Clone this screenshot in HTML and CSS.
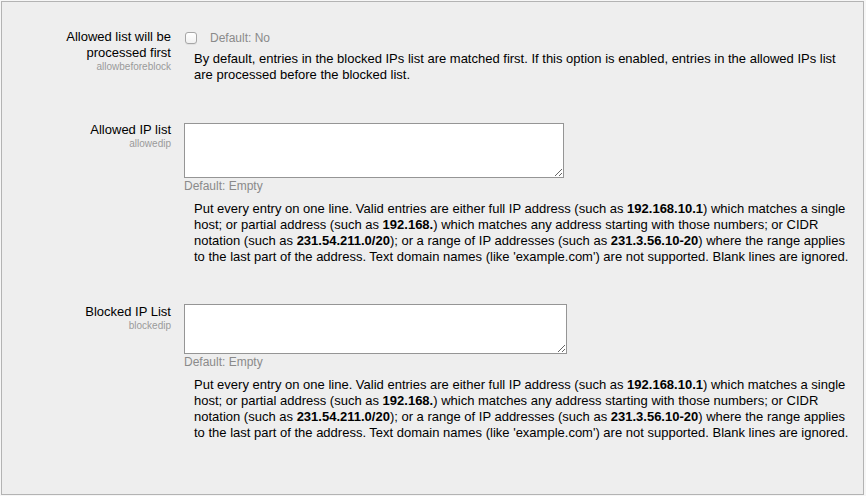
FILE: index.html
```html
<!DOCTYPE html>
<html>
<head>
<meta charset="utf-8">
<title>IP settings</title>
<link rel="stylesheet" href="styles.css">
</head>
<body>
<div class="panel">
  <div class="row row-first">
    <div class="label">
      <div class="label-title">Allowed list will be processed first</div>
      <div class="label-key">allowbeforeblock</div>
    </div>
    <div class="field field-check">
      <div class="check-line">
        <input type="checkbox" class="check">
        <span class="default">Default: No</span>
      </div>
      <p class="desc desc-check">By default, entries in the blocked IPs list are matched first. If this option is enabled, entries in the allowed IPs list are processed before the blocked list.</p>
    </div>
  </div>

  <div class="row row-gap">
    <div class="label">
      <div class="label-title">Allowed IP list</div>
      <div class="label-key">allowedip</div>
    </div>
    <div class="field field-area">
      <textarea class="area area-allowed"></textarea>
      <div class="default">Default: Empty</div>
      <p class="desc">Put every entry on one line. Valid entries are either full IP address (such as <b>192.168.10.1</b>) which matches a single host; or partial address (such as <b>192.168.</b>) which matches any address starting with those numbers; or CIDR notation (such as <b>231.54.211.0/20</b>); or a range of IP addresses (such as <b>231.3.56.10-20</b>) where the range applies to the last part of the address. Text domain names (like 'example.com') are not supported. Blank lines are ignored.</p>
    </div>
  </div>

  <div class="row row-gap">
    <div class="label">
      <div class="label-title">Blocked IP List</div>
      <div class="label-key">blockedip</div>
    </div>
    <div class="field">
      <textarea class="area area-blocked"></textarea>
      <div class="default">Default: Empty</div>
      <p class="desc desc-last">Put every entry on one line. Valid entries are either full IP address (such as <b>192.168.10.1</b>) which matches a single host; or partial address (such as <b>192.168.</b>) which matches any address starting with those numbers; or CIDR notation (such as <b>231.54.211.0/20</b>); or a range of IP addresses (such as <b>231.3.56.10-20</b>) where the range applies to the last part of the address. Text domain names (like 'example.com') are not supported. Blank lines are ignored.</p>
    </div>
  </div>
</div>
</body>
</html>
```

FILE: styles.css
```css
html, body {
  margin: 0;
  padding: 0;
  background: #f6f6f6;
}

body {
  padding: 1px 2px 1px 1px;
  font-family: "Liberation Sans", Arial, Helvetica, sans-serif;
  font-size: 13px;
  color: #000;
}

.panel {
  box-sizing: border-box;
  min-height: 494px;
  background: #eeeeee;
  border: 1px solid #b3b3b3;
  padding: 27px 8px 20px 0;
}

.row {
  display: grid;
  grid-template-columns: 169px 1fr;
  column-gap: 13px;
}

.row-gap {
  margin-top: 39px;
}

.label {
  text-align: right;
  padding-left: 54px;
}

.label-title {
  font-size: 13px;
  line-height: 16px;
}

.label-key {
  font-size: 10px;
  line-height: 12px;
  color: #9a9a9a;
}

.field-check {
  padding-top: 1px;
}

.field-area {
  padding-top: 1px;
}

.check-line {
  display: flex;
  align-items: center;
  height: 16px;
}

.check {
  appearance: none;
  -webkit-appearance: none;
  box-sizing: border-box;
  width: 12px;
  height: 12px;
  margin: 0 13px 0 1px;
  border: 1px solid #a6a6a6;
  border-radius: 3px;
  background: linear-gradient(#ffffff, #f1f1f1);
  box-shadow: 0 1px 0 rgba(0, 0, 0, 0.05);
}

.default {
  font-size: 12px;
  line-height: 16px;
  color: #8a8a8a;
}

.desc {
  margin: 7px 0 0 10px;
  font-size: 13px;
  line-height: 16px;
}

.desc-check {
  margin-top: 5px;
}

.desc b {
  font-weight: bold;
}

.area {
  display: block;
  box-sizing: border-box;
  margin: 0;
  border: 1px solid #959595;
  background: #fff;
  font-family: "Liberation Mono", monospace;
  font-size: 12px;
}

.area-allowed {
  width: 380px;
  height: 55px;
}

.area-blocked {
  width: 383px;
  height: 50px;
}
```
